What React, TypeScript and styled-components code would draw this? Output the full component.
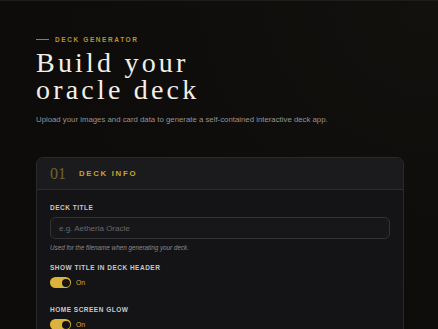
import styled, { createGlobalStyle } from "styled-components";

const Global = createGlobalStyle`
  html, body {
    margin: 0;
    background: #0d0c0b;
    height: 100%;
    overflow: hidden;
  }
  body {
    font-family: "Liberation Sans", Arial, sans-serif;
  }
`;

function Toggle({ on }: { on: boolean }) {
  return (
    <ToggleRow>
      <Track $on={on}>
        <Knob />
      </Track>
      <ToggleText>{on ? "On" : "Off"}</ToggleText>
    </ToggleRow>
  );
}

function App() {
  return (
    <>
      <Global />
      <Page>
        <Hero>
          <Eyebrow>
            <Rule />
            DECK GENERATOR
          </Eyebrow>
          <Title>
            <TitleLine>Build your</TitleLine>
            <TitleLine>oracle deck</TitleLine>
          </Title>
          <Lead>
            Upload your images and card data to generate a self-contained interactive deck app.
          </Lead>
        </Hero>
        <Card>
          <CardHeader>
            <StepNum>01</StepNum>
            <StepTitle>DECK INFO</StepTitle>
          </CardHeader>
          <CardBody>
            <Field>
              <Label>DECK TITLE</Label>
              <Input placeholder="e.g. Aetheria Oracle" />
              <Hint>Used for the filename when generating your deck.</Hint>
            </Field>
            <Field>
              <Label>SHOW TITLE IN DECK HEADER</Label>
              <Toggle on />
            </Field>
            <Field>
              <Label>HOME SCREEN GLOW</Label>
              <Toggle on />
            </Field>
          </CardBody>
        </Card>
      </Page>
    </>
  );
}

const Page = styled.div`
  min-height: 100vh;
  box-sizing: border-box;
  border-top: 1px solid #1e1d1b;
  padding: 32px 36px 40px;
  background: radial-gradient(ellipse at 100% 0%, #12110e 0%, #0d0c0b 60%);
`;

const Hero = styled.div`
  display: flex;
  flex-direction: column;
`;

const Eyebrow = styled.div`
  display: flex;
  align-items: center;
  gap: 6px;
  font-size: 6.5px;
  font-weight: 700;
  letter-spacing: 1.6px;
  color: #b8952c;
  height: 12px;
`;

const Rule = styled.span`
  width: 13px;
  height: 1px;
  background: #9c7f28;
`;

const Title = styled.h1`
  margin: 4px 0 0;
  display: flex;
  flex-direction: column;
  font-family: "Liberation Serif", "Times New Roman", serif;
  font-weight: 400;
  font-size: 28px;
  letter-spacing: 3.2px;
  color: #f2efe8;
`;

const TitleLine = styled.span`
  display: block;
  height: 27px;
  line-height: 27px;
  overflow: visible;
`;

const Lead = styled.p`
  margin: 12px 0 0;
  font-size: 7.8px;
  color: #959390;
`;

const Card = styled.div`
  margin-top: 33px;
  border: 1px solid #2a2a2e;
  border-radius: 7px;
  overflow: hidden;
  background: #141417;
  width: 366px;
`;

const CardHeader = styled.div`
  height: 31px;
  display: flex;
  align-items: center;
  padding: 0 13px;
  gap: 13px;
  background: #1b1b1e;
  border-bottom: 1px solid #2d2d31;
`;

const StepNum = styled.span`
  font-family: "Liberation Serif", serif;
  font-size: 16px;
  color: #6f6230;
`;

const StepTitle = styled.span`
  font-size: 7.8px;
  font-weight: 700;
  letter-spacing: 1.7px;
  color: #c9a42a;
`;

const CardBody = styled.div`
  padding: 14px 13px;
  display: flex;
  flex-direction: column;
  gap: 13px;
`;

const Field = styled.div`
  display: flex;
  flex-direction: column;
`;

const Label = styled.div`
  font-size: 6.5px;
  font-weight: 700;
  letter-spacing: 0.5px;
  color: #c9c9c9;
  margin-bottom: 6px;
`;

const Input = styled.input`
  box-sizing: border-box;
  width: 100%;
  height: 22px;
  border: 1px solid #313136;
  border-radius: 5px;
  background: #17171a;
  padding: 0 8px;
  font-family: "Liberation Sans", Arial, sans-serif;
  font-size: 8px;
  color: #ddd;
  outline: none;
  &::placeholder {
    color: #67676a;
  }
`;

const Hint = styled.div`
  margin-top: 5px;
  font-size: 6.3px;
  font-style: italic;
  color: #8a8a8c;
`;

const ToggleRow = styled.div`
  display: flex;
  align-items: center;
  gap: 5px;
  margin-bottom: 5px;
`;

const Track = styled.div<{ $on: boolean }>`
  width: 21px;
  height: 11px;
  border-radius: 6px;
  background: ${(p) => (p.$on ? "#dcb33a" : "#3a3a3e")};
  display: flex;
  align-items: center;
  justify-content: ${(p) => (p.$on ? "flex-end" : "flex-start")};
  padding: 0 1.5px;
  box-sizing: border-box;
`;

const Knob = styled.div`
  width: 8px;
  height: 8px;
  border-radius: 50%;
  background: #141417;
`;

const ToggleText = styled.span`
  font-size: 6.8px;
  color: #d2ab33;
`;

export default App;
